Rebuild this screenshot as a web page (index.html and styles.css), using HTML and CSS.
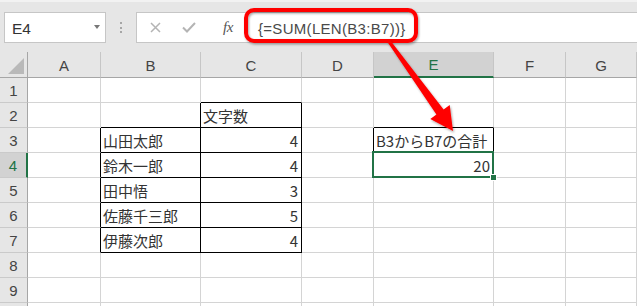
FILE: index.html
```html
<!DOCTYPE html>
<html lang="ja">
<head>
<meta charset="UTF-8">
<title>SUM(LEN)</title>
<link rel="stylesheet" href="styles.css">
</head>
<body>
<div class="app">
  <!-- 数式バー -->
  <div class="toolbar">
    <div class="namebox"><span class="ref">E4</span><span class="caret"></span></div>
    <div class="grip"><i></i><i></i><i></i></div>
    <div class="fbar">
      <span class="btn">
        <svg width="11" height="11" viewBox="0 0 11 11"><path d="M1 1L10 10M10 1L1 10" stroke="#b4b4b4" stroke-width="1.5" fill="none"/></svg>
      </span>
      <span class="btn">
        <svg width="14" height="11" viewBox="0 0 14 11"><path d="M1 5.5L5 9.5L13 1" stroke="#b4b4b4" stroke-width="2" fill="none"/></svg>
      </span>
      <span class="fx">fx</span>
      <div class="formula">{=SUM(LEN(B3:B7))}</div>
    </div>
  </div>

  <!-- シート -->
  <div class="sheet">
    <div class="c corner"><span class="tri"></span></div>
    <div class="c ch">A</div>
    <div class="c ch">B</div>
    <div class="c ch">C</div>
    <div class="c ch">D</div>
    <div class="c ch sel">E</div>
    <div class="c ch">F</div>
    <div class="c ch">G</div>

    <div class="c rh">1</div>
    <div class="c"></div>
    <div class="c"></div>
    <div class="c bb"></div>
    <div class="c"></div>
    <div class="c"></div>
    <div class="c"></div>
    <div class="c"></div>

    <div class="c rh">2</div>
    <div class="c"></div>
    <div class="c br bb"></div>
    <div class="c br bb">文字数</div>
    <div class="c"></div>
    <div class="c bb"></div>
    <div class="c"></div>
    <div class="c"></div>

    <div class="c rh">3</div>
    <div class="c br"></div>
    <div class="c br bb">山田太郎</div>
    <div class="c num br bb">4</div>
    <div class="c br"></div>
    <div class="c br bb">B3からB7の合計</div>
    <div class="c"></div>
    <div class="c"></div>

    <div class="c rh sel">4</div>
    <div class="c br"></div>
    <div class="c br bb">鈴木一郎</div>
    <div class="c num br bb">4</div>
    <div class="c br"></div>
    <div class="c num br bb active">20</div>
    <div class="c"></div>
    <div class="c"></div>

    <div class="c rh">5</div>
    <div class="c br"></div>
    <div class="c br bb">田中悟</div>
    <div class="c num br bb">3</div>
    <div class="c"></div>
    <div class="c"></div>
    <div class="c"></div>
    <div class="c"></div>

    <div class="c rh">6</div>
    <div class="c br"></div>
    <div class="c br bb">佐藤千三郎</div>
    <div class="c num br bb">5</div>
    <div class="c"></div>
    <div class="c"></div>
    <div class="c"></div>
    <div class="c"></div>

    <div class="c rh">7</div>
    <div class="c br"></div>
    <div class="c br bb">伊藤次郎</div>
    <div class="c num br bb">4</div>
    <div class="c"></div>
    <div class="c"></div>
    <div class="c"></div>
    <div class="c"></div>

    <div class="c rh">8</div>
    <div class="c"></div>
    <div class="c"></div>
    <div class="c"></div>
    <div class="c"></div>
    <div class="c"></div>
    <div class="c"></div>
    <div class="c"></div>

    <div class="c rh">9</div>
    <div class="c"></div>
    <div class="c"></div>
    <div class="c"></div>
    <div class="c"></div>
    <div class="c"></div>
    <div class="c"></div>
    <div class="c"></div>

    <!-- 10行目は画面下端で切れている -->
    <div class="c rh"></div>
    <div class="c"></div>
    <div class="c"></div>
    <div class="c"></div>
    <div class="c"></div>
    <div class="c"></div>
    <div class="c"></div>
    <div class="c"></div>
  </div>

  <!-- 赤い囲みと矢印 -->
  <svg class="callout" width="637" height="306" viewBox="0 0 637 306">
    <defs>
      <filter id="sh" x="-10%" y="-10%" width="130%" height="130%">
        <feDropShadow dx="1" dy="1.5" stdDeviation="1.2" flood-color="#000" flood-opacity="0.35"/>
      </filter>
    </defs>
    <rect x="246" y="10" width="170" height="31" rx="8" fill="none" stroke="#ff0000" stroke-width="4" filter="url(#sh)"/>
    <polygon points="389.2,39.1 443.6,109.4 449.7,105 453,131 430.3,119 436.4,114.6 386.8,40.9" fill="#ff0000" filter="url(#sh)"/>
  </svg>
</div>
</body>
</html>
```

FILE: styles.css
```css
body {
    margin: 0;
    background: #fff;
    overflow: hidden;
}
.app {
    position: relative;
    width: 637px;
    height: 306px;
    overflow: hidden;
}

/* 数式バー */
.toolbar {
    height: 52px;
    box-sizing: border-box;
    background: #e6e6e6;
    border-top: 2px solid #f2f2f2;
    padding: 10px 0 0 4px;
    display: flex;
    align-items: flex-start;
}
.namebox {
    width: 102px;
    height: 31px;
    box-sizing: border-box;
    background: #fff;
    border: 1px solid #c6c6c6;
    display: flex;
    align-items: center;
    padding: 3px 5px 0 7px;
    font: 15.5px "Liberation Sans", Arial, sans-serif;
    color: #333;
}
.ref {
    flex: 1;
}
.caret {
    width: 0;
    height: 0;
    border-left: 3.5px solid transparent;
    border-right: 3.5px solid transparent;
    border-top: 4px solid #777;
    margin-top: -4px;
}
.grip {
    width: 30px;
    height: 31px;
    display: flex;
    flex-direction: column;
    align-items: center;
    justify-content: center;
    gap: 2.5px;
}
.grip i {
    width: 2px;
    height: 2px;
    background: #a6a6a6;
}
.fbar {
    flex: 1;
    height: 31px;
    box-sizing: border-box;
    background: #fff;
    border: 1px solid #c6c6c6;
    border-right: none;
    display: flex;
    align-items: center;
    padding-left: 1px;
}
.btn {
    width: 34px;
    display: flex;
    justify-content: center;
    align-items: center;
}
.fx {
    width: 40px;
    padding-left: 2px;
    text-align: center;
    font: italic 15px "Liberation Serif", "Times New Roman", serif;
    color: #555;
    letter-spacing: -0.5px;
}
.formula {
    margin-left: 10px;
    padding-top: 1px;
    font: 15px "Liberation Sans", Arial, sans-serif;
    letter-spacing: 0.3px;
    color: #4a4a4a;
    white-space: nowrap;
}

/* シート */
.sheet {
    display: grid;
    grid-template-columns: 28px 73px 100px 101px 72px 120px 72px 71px;
    grid-template-rows: 26px;
    grid-auto-rows: 25px;
}
.c {
    position: relative;
    box-sizing: border-box;
    border-right: 1px solid #d4d4d4;
    border-bottom: 1px solid #d4d4d4;
    display: flex;
    align-items: center;
    padding: 1px 2px 0 2px;
    font: 15px "Noto Sans CJK JP", sans-serif;
    line-height: 1;
    color: #333;
    white-space: nowrap;
}
.num {
    justify-content: flex-end;
    padding-right: 3px;
}
.br {
    border-right-color: #000;
}
.bb {
    border-bottom-color: #000;
}
.ch,
.rh,
.corner {
    background: #e6e6e6;
    justify-content: center;
    font: 15px "Liberation Sans", Arial, sans-serif;
    color: #444;
}
.ch {
    border-right-color: #c6c6c6;
    border-bottom-color: #a6a6a6;
}
.rh {
    border-right-color: #a6a6a6;
    border-bottom-color: #cacaca;
}
.corner {
    border-right-color: #a6a6a6;
    border-bottom-color: #a6a6a6;
}
.tri {
    position: absolute;
    right: 3px;
    bottom: 3px;
    width: 0;
    height: 0;
    border-left: 16px solid transparent;
    border-bottom: 16px solid #b9b9b9;
}
.ch.sel {
    background: #d2d2d2;
    color: #217346;
    border-bottom: 2px solid #217346;
}
.rh.sel {
    background: #d2d2d2;
    color: #217346;
    border-right: 2px solid #217346;
}

/* 選択セル */
.active::after {
    content: "";
    position: absolute;
    top: -2px;
    left: -2px;
    right: -1px;
    bottom: -1px;
    border: 2px solid #217346;
}
.active::before {
    content: "";
    position: absolute;
    left: 116px;
    top: 21px;
    width: 5px;
    height: 5px;
    background: #217346;
    border: 1px solid #fff;
    z-index: 1;
}

.callout {
    position: absolute;
    top: 0;
    left: 0;
    pointer-events: none;
}
```
